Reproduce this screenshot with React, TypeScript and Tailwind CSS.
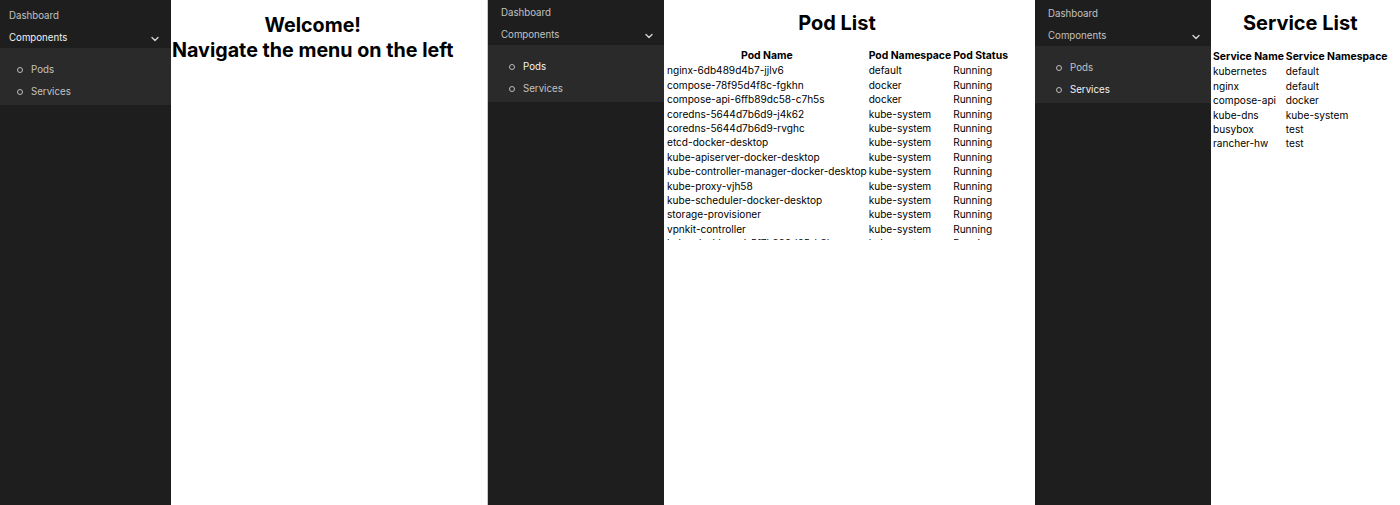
import React from "react";

type Active = "components" | "pods" | "services";

function Chevron() {
  return (
    <svg width="8" height="6" viewBox="0 0 8 6" className="shrink-0 mt-[2px]">
      <path d="M1 1.5 L4 4.5 L7 1.5" fill="none" stroke="#d4d4d4" strokeWidth="1.4" strokeLinecap="round" strokeLinejoin="round" />
    </svg>
  );
}

function Bullet() {
  return <span className="inline-block w-[6px] h-[6px] rounded-full border border-[#bdbdbd] shrink-0" />;
}

function Sidebar({
  active,
  width,
  pt,
  pl,
  chevRight,
}: {
  active: Active;
  width: string;
  pt: string;
  pl: number;
  chevRight: string;
}) {
  const on = "text-[#f2f2f2]";
  const off = "text-[#c2c2c2]";
  return (
    <div className={`${width} shrink-0 h-full bg-[#1e1e1e] ${pt} text-[9.7px]`}>
      <div className="h-[22px] pt-[2px] flex items-center text-[#c2c2c2]" style={{ paddingLeft: pl }}>
        Dashboard
      </div>
      <div
        className={`h-[22px] pt-[2px] flex items-center justify-between ${active === "components" ? on : off} ${chevRight}`}
        style={{ paddingLeft: pl }}
      >
        <span>Components</span>
        <Chevron />
      </div>
      <div className="bg-[#2a2a2a] pt-[10px] pb-[3px]">
        <div className={`h-[22px] pt-[2px] flex items-center gap-[8px] ${active === "pods" ? on : off}`} style={{ paddingLeft: pl + 8 }}>
          <Bullet />
          <span>Pods</span>
        </div>
        <div className={`h-[22px] pt-[2px] flex items-center gap-[8px] ${active === "services" ? on : off}`} style={{ paddingLeft: pl + 8 }}>
          <Bullet />
          <span>Services</span>
        </div>
      </div>
    </div>
  );
}

const pods: [string, string, string][] = [
  ["nginx-6db489d4b7-jjlv6", "default", "Running"],
  ["compose-78f95d4f8c-fgkhn", "docker", "Running"],
  ["compose-api-6ffb89dc58-c7h5s", "docker", "Running"],
  ["coredns-5644d7b6d9-j4k62", "kube-system", "Running"],
  ["coredns-5644d7b6d9-rvghc", "kube-system", "Running"],
  ["etcd-docker-desktop", "kube-system", "Running"],
  ["kube-apiserver-docker-desktop", "kube-system", "Running"],
  ["kube-controller-manager-docker-desktop", "kube-system", "Running"],
  ["kube-proxy-vjh58", "kube-system", "Running"],
  ["kube-scheduler-docker-desktop", "kube-system", "Running"],
  ["storage-provisioner", "kube-system", "Running"],
  ["vpnkit-controller", "kube-system", "Running"],
];

const services: [string, string][] = [
  ["kubernetes", "default"],
  ["nginx", "default"],
  ["compose-api", "docker"],
  ["kube-dns", "kube-system"],
  ["busybox", "test"],
  ["rancher-hw", "test"],
];

export default function App() {
  return (
    <div
      className="flex w-[1400px] h-[505px] overflow-hidden bg-white text-black"
      style={{ fontFamily: "Inter, 'Noto Sans', sans-serif" }}
    >
      {/* Panel 1 */}
      <Sidebar active="components" width="w-[171px]" pt="pt-[4px]" pl={9} chevRight="pr-[12px]" />
      <div className="w-[316px] shrink-0 h-full bg-white">
        <h1 className="w-fit ml-[1px] mt-[13px] text-center font-bold text-[19.7px] leading-[25px]">
          Welcome!
          <br />
          Navigate the menu on the left
        </h1>
      </div>

      {/* Panel 2 */}
      <div className="w-px shrink-0 h-full bg-[#c9c9c9]" />
      <Sidebar active="pods" width="w-[176px]" pt="pt-[1px]" pl={13} chevRight="pr-[11px]" />
      <div className="w-[371px] shrink-0 h-full bg-white overflow-hidden">
        <div className="w-fit">
          <h1 className="text-center font-bold text-[20px] leading-[25px] mt-[11px] mb-[13px]">Pod List</h1>
          <div className="h-[191px] overflow-hidden">
            <table className="ml-[1px] border-separate border-spacing-x-[2px] border-spacing-y-0 text-[10.1px] leading-[14.4px]">
              <thead>
                <tr>
                  <th className="px-0 font-bold text-[10.4px]">Pod Name</th>
                  <th className="px-0 font-bold text-[10.4px]">Pod Namespace</th>
                  <th className="px-0 font-bold text-[10.4px]">Pod Status</th>
                </tr>
              </thead>
              <tbody>
                {pods.map((p) => (
                  <tr key={p[0]}>
                    <td className="px-0">{p[0]}</td>
                    <td className="px-0">{p[1]}</td>
                    <td className="px-0">{p[2]}</td>
                  </tr>
                ))}
                <tr>
                  <td className="px-0">kube-dashboard-5f7b999d65-h8l</td>
                  <td className="px-0">kube-system</td>
                  <td className="px-0">Running</td>
                </tr>
              </tbody>
            </table>
          </div>
        </div>
      </div>

      {/* Panel 3 */}
      <Sidebar active="services" width="w-[176px]" pt="pt-[2px]" pl={13} chevRight="pr-[11px]" />
      <div className="flex-1 h-full bg-white">
        <div className="w-fit">
          <h1 className="text-center font-bold text-[20px] leading-[25px] mt-[11px] mb-[14px]">Service List</h1>
          <table className="border-separate border-spacing-x-[2px] border-spacing-y-0 text-[10.1px] leading-[14.4px]">
            <thead>
              <tr>
                <th className="px-0 font-bold text-left text-[10.4px]">Service Name</th>
                <th className="px-0 font-bold text-left text-[10.4px]">Service Namespace</th>
              </tr>
            </thead>
            <tbody>
              {services.map((s) => (
                <tr key={s[0]}>
                  <td className="px-0">{s[0]}</td>
                  <td className="px-0">{s[1]}</td>
                </tr>
              ))}
            </tbody>
          </table>
        </div>
      </div>
    </div>
  );
}
